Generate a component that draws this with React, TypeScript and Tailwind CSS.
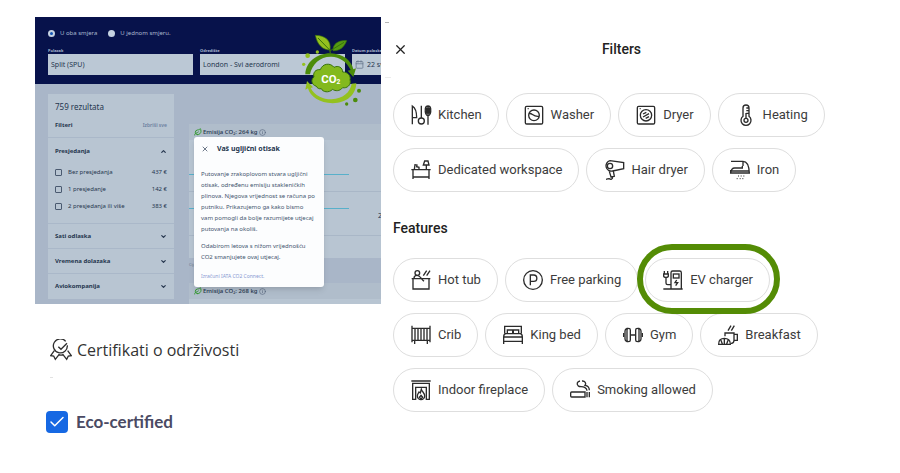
import React from "react";
import { Calendar, Check, ChevronDown, ChevronUp, Info, Leaf, X } from "lucide-react";

interface ChipItem {
    label: string;
    icon: React.ReactNode;
    highlighted?: boolean;
}

interface StopOption {
    label: string;
    price: string;
}

// All amenity icons share a 60x60 grid
const icons = {
    kitchen: (
        <>
            <path d="M4 58V3C12 8 17 20 17 38H4" />
            <path d="M31 2V39" />
            <circle cx="31" cy="48" r="9" />
            <path d="M51 33C45 31 42 22 43 11C44 5 47 3 51 3S58 5 59 11C60 22 57 31 51 33ZM51 3V59M47 8V26M55 8V26" />
        </>
    ),
    washer: (
        <>
            <rect x="4" y="4" width="52" height="53" rx="4" />
            <circle cx="30" cy="31" r="16" />
            <path d="M15 26C24 22 27 37 45 34M11 11H14" />
        </>
    ),
    dryer: (
        <>
            <rect x="4" y="4" width="52" height="53" rx="4" />
            <circle cx="30" cy="31" r="17" />
            <path d="M21 27L31 22M21 36L39 26M29 40L39 35M11 11H14" />
        </>
    ),
    heating: (
        <>
            <path d="M21 34V9A9 9 0 0 1 39 9V34A15 15 0 1 1 21 34Z" />
            <circle cx="30" cy="46" r="6" />
            <path d="M30 40V24M31 9H39M31 17H39M31 25H39" />
        </>
    ),
    workspace: (
        <>
            <path d="M1 29H59M6 29V57M54 29V57M6 51H54" />
            <path d="M10 28L12 14L18 15L17 20L24 22V28" />
            <path d="M46 28V15M41 3H51L54 15H37Z" />
        </>
    ),
    hairDryer: (
        <>
            <circle cx="18" cy="18" r="8" />
            <path d="M18 2L59 8V26L26 33A16 16 0 1 1 18 2Z" />
            <path d="M16 34L21 51L31 49L28 33M26 51C26 58 20 59 16 56C13 55 10 58 6 58" />
        </>
    ),
    iron: (
        <>
            <path d="M3 4H39C49 4 57 14 58 39H2C3 30 7 24 14 24H37V18M39 4V18M2 39V30M4 33H57" />
            <path d="M24 48H27M32 48H35M40 48H43M20 56H23M29 56H32M37 56H40" strokeWidth="3" />
        </>
    ),
    hotTub: (
        <>
            <path d="M2 26H58M6 26V57H54V26" />
            <circle cx="19" cy="9" r="7" />
            <path d="M9 25C9 18 12 16 18 16C29 16 31 28 39 34M47 2L37 17M57 2L47 17" />
        </>
    ),
    parking: (
        <>
            <circle cx="30" cy="30" r="28" />
            <path d="M22 46V15H32A9 9 0 0 1 32 34H22" />
        </>
    ),
    charger: (
        <>
            <path d="M1 57H59M24 57V8Q24 3 29 3H50Q55 3 55 8V57" />
            <rect x="31" y="12" width="17" height="12" />
            <path d="M4 3V12M14 3V12M2 12H16V18Q16 22 9 22Q2 22 2 18ZM9 22V39Q9 44 14 44H24M41 30L36 38H44L38 47" />
        </>
    ),
    crib: (
        <>
            <path d="M3 2V52M57 2V52M3 10H57M3 46H57M12 10V46M21 10V46M30 10V46M39 10V46M48 10V46M11 47V57M49 47V57" />
        </>
    ),
    bed: (
        <>
            <path d="M5 25V4H55V25M2 36Q2 26 9 26H51Q58 26 58 36V57M2 36V57M2 36H58M2 49H58" />
            <path d="M13 25V15H29V25M31 25V15H47V25" />
        </>
    ),
    gym: (
        <>
            <path d="M22 30H38M2 24V36M58 24V36" />
            <path d="M12 10Q6 12 6 18V42Q6 48 12 50ZM12 14Q12 10 17 10T22 15V45Q22 50 17 50T12 46" />
            <path d="M48 10Q54 12 54 18V42Q54 48 48 50ZM48 14Q48 10 43 10T38 15V45Q38 50 43 50T48 46" />
        </>
    ),
    breakfast: (
        <>
            <path d="M21 34V24H48V46Q48 55 40 55H38M48 28H58V46H48M39 2L30 17M49 2L40 17" />
            <path d="M2 58C1 46 9 40 19 40S38 46 37 58ZM13 57L9 46M26 57L30 46M19 41V57" />
        </>
    ),
    fireplace: (
        <>
            <path d="M1 3H59M3 10H57M5 11V58H14V22H46V58H55V11" />
            <path d="M31 28C33 35 42 40 41 48A11 11 0 0 1 19 48C19 42 22 40 24 36L28 39Z" />
            <path d="M30 46L25 52L30 57L35 52Z" />
        </>
    ),
    smoking: (
        <>
            <path d="M5 36H45V51H5Q2 51 2 48V39Q2 36 5 36ZM51 36V52M58 36V52" />
            <path d="M30 3C21 5 19 12 25 18C29 22 37 18 44 22Q51 26 51 32M36 3C45 2 50 10 45 16C54 17 58 24 58 31" />
        </>
    ),
};

const amenities: ChipItem[] = [
    { label: "Kitchen", icon: icons.kitchen },
    { label: "Washer", icon: icons.washer },
    { label: "Dryer", icon: icons.dryer },
    { label: "Heating", icon: icons.heating },
    { label: "Dedicated workspace", icon: icons.workspace },
    { label: "Hair dryer", icon: icons.hairDryer },
    { label: "Iron", icon: icons.iron },
];

const features: ChipItem[] = [
    { label: "Hot tub", icon: icons.hotTub },
    { label: "Free parking", icon: icons.parking },
    { label: "EV charger", icon: icons.charger, highlighted: true },
    { label: "Crib", icon: icons.crib },
    { label: "King bed", icon: icons.bed },
    { label: "Gym", icon: icons.gym },
    { label: "Breakfast", icon: icons.breakfast },
    { label: "Indoor fireplace", icon: icons.fireplace },
    { label: "Smoking allowed", icon: icons.smoking },
];

const stops: StopOption[] = [
    { label: "Bez presjedanja", price: "437 €" },
    { label: "1 presjedanje", price: "142 €" },
    { label: "2 presjedanja ili više", price: "383 €" },
];

const sections = ["Sati odlaska", "Vremena dolazaka", "Aviokompanija"];

const Chip: React.FC<{ item: ChipItem }> = ({ item }) => (
    <li className="relative">
        <button className="flex h-11 items-center gap-[7px] rounded-full border border-[#dedede] bg-white pr-4 pl-[17px] text-[13px] whitespace-nowrap text-[#3c3c3c]">
            <svg viewBox="0 0 60 60" className="size-5 overflow-visible fill-none stroke-[#2b2b2b] stroke-[4]" aria-hidden="true">
                {item.icon}
            </svg>
            {item.label}
        </button>
        {item.highlighted && (
            <span className="pointer-events-none absolute -top-3.5 -right-2.5 -bottom-3 -left-2 z-10 rounded-full border-6 border-[#548c05]" />
        )}
    </li>
);

const ChipList: React.FC<{ items: ChipItem[] }> = ({ items }) => (
    <ul className="flex flex-wrap gap-x-[7px] gap-y-[11px]">
        {items.map((item) => (
            <Chip key={item.label} item={item} />
        ))}
    </ul>
);

const Co2Badge: React.FC = () => (
    <svg viewBox="0 0 285 246" className="absolute top-[11px] left-[255px] h-[82px] w-[95px]" aria-hidden="true">
        <path d="M121 75C120 58 112 48 97 38" fill="none" stroke="#39730b" strokeWidth="4" />
        <path d="M76 22C105 22 125 38 120 66C99 66 82 52 76 22Z" fill="#94c11f" stroke="#39730b" strokeWidth="2" />
        <path d="M170 38C144 36 128 49 129 68C149 69 162 58 170 38Z" fill="#559b12" stroke="#39730b" strokeWidth="2" />
        <path d="M84 30L121 68L162 43" fill="none" stroke="#39730b" strokeWidth="3" />
        <path d="M46 139C47 103 80 76 121 76C160 77 184 98 190 124L198 121L190 147L173 128L182 126C171 101 149 87 124 86C91 85 66 108 60 139Z" fill="#4c8c0a" />
        <path d="M199 166C198 200 171 225 128 226C89 225 60 206 54 181L46 185L51 159L69 178L62 180C74 203 98 214 125 214C159 211 180 194 185 167Z" fill="#94c11f" />
        <path d="M78 174C64 171 62 153 72 147C68 134 77 123 91 125C98 105 122 104 132 118C145 111 158 119 158 132C174 132 183 144 180 155C185 171 170 182 158 179C149 190 136 190 128 184C116 196 98 192 94 182C88 184 81 180 78 174Z" fill="#83b91d" stroke="#39730b" strokeWidth="3" />
        <circle cx="53" cy="83" r="7" fill="#94c11f" />
        <circle cx="82" cy="72" r="5" fill="#94c11f" />
        <circle cx="41" cy="109" r="5" fill="#94c11f" />
        <circle cx="207" cy="188" r="6" fill="#4c8c0a" />
        <circle cx="196" cy="216" r="7" fill="#4c8c0a" />
        <circle cx="170" cy="228" r="5" fill="#4c8c0a" />
        <text x="94" y="165" fill="#fff" fontFamily="Roboto, sans-serif" fontWeight="700" fontSize="34">
            CO<tspan fontSize="20" dy="4">2</tspan>
        </text>
    </svg>
);

const Emission: React.FC<{ kg: number }> = ({ kg }) => (
    <div className="flex h-4 items-center gap-px bg-[#b0bdcb] pl-[5px] text-[6px] font-medium">
        <Leaf className="size-2 text-[#379b35]" strokeWidth={3} />
        <span>Emisija CO₂: {kg} kg</span>
        <Info className="ml-px size-[7px] text-[#52627b]" />
    </div>
);

const FlightSearch: React.FC = () => (
    <section className="relative mr-px overflow-hidden bg-[#a9b6c8] font-['Noto_Sans',sans-serif] text-[6px] text-[#25364e]">
        <form className="bg-[#07124b] px-[13px] pt-3 pb-[9px] text-[#a9b8ce]">
            <div className="flex h-2 items-center gap-[11px]">
                <label className="flex items-center gap-[5px]">
                    <input type="radio" name="trip" defaultChecked className="size-[7px] appearance-none rounded-full border-2 border-[#c5d2e2] bg-[#1557b5]" />
                    U oba smjera
                </label>
                <label className="flex items-center gap-[5px]">
                    <input type="radio" name="trip" className="size-[7px] appearance-none rounded-full bg-[#c5d2e2]" />
                    U jednom smjeru.
                </label>
            </div>
            <div className="mt-2.5 grid grid-cols-[145px_145px_145px] gap-[7px]">
                <label className="text-[4px] leading-[7px] font-bold">
                    Polazak
                    <input defaultValue="Split (SPU)" className="block h-[21px] w-full bg-[#bbc8d5] px-[3px] text-[7px] font-normal text-[#25364e]" />
                </label>
                <label className="text-[4px] leading-[7px] font-bold">
                    Odredište
                    <input defaultValue="London - Svi aerodromi" className="block h-[21px] w-full bg-[#bbc8d5] px-[3px] text-[7px] font-normal text-[#25364e]" />
                </label>
                <label className="text-[4px] leading-[7px] font-bold">
                    Datum polaska
                    <span className="flex h-[21px] items-center gap-[3px] bg-[#bbc8d5] px-[3px] font-normal text-[#25364e]">
                        <Calendar className="size-[9px] shrink-0 text-[#64748b]" strokeWidth={2} />
                        <input defaultValue="22 svi" className="w-full text-[7px]" />
                    </span>
                </label>
            </div>
        </form>

        <div className="flex gap-[15px] px-[13px] pt-2.5 pb-[5px]">
            <aside className="w-[126px] shrink-0 divide-y divide-[#aab8c9] bg-[#b8c5d2]">
                <div className="h-11 px-[7px] pt-2">
                    <p className="text-[8px] leading-[10px]">759 rezultata</p>
                    <div className="mt-2 flex items-center justify-between leading-[10px]">
                        <h2 className="font-bold">Filteri</h2>
                        <button className="text-[5px] font-semibold text-[#6b7f9f]">Izbriši sve</button>
                    </div>
                </div>
                <div role="group" aria-label="Presjedanja" className="h-[86px] px-[7px]">
                    <div className="flex h-[26px] items-center justify-between font-bold">
                        Presjedanja
                        <ChevronUp className="size-[7px]" strokeWidth={4} />
                    </div>
                    {stops.map((stop) => (
                        <label key={stop.label} className="flex h-[17px] items-center gap-[6px]">
                            <input type="checkbox" className="size-[7px] appearance-none rounded-[1px] border border-[#4a5a70]" />
                            {stop.label}
                            <span className="ml-auto">{stop.price}</span>
                        </label>
                    ))}
                </div>
                {sections.map((name) => (
                    <button key={name} className="flex h-[25px] w-full items-center justify-between px-[7px] font-bold">
                        {name}
                        <ChevronDown className="size-[7px]" strokeWidth={4} />
                    </button>
                ))}
            </aside>

            <div className="h-[205px] w-[210px] shrink-0 pt-[30px]">
                <article className="bg-[#b8c5d2]">
                    <Emission kg={264} />
                    <div className="h-[52px] border-b border-[#a9b7c7] pt-[34px]">
                        <div className="h-px w-40 bg-[#58b0ca]" />
                    </div>
                    <div className="flex h-11 border-b border-[#a9b7c7] pt-4">
                        <div className="h-px w-40 shrink-0 bg-[#58b0ca]" />
                        <span className="ml-[29px] pt-[3px] text-[7px] leading-[10px]">2</span>
                    </div>
                    <div className="h-[22px]" />
                </article>
                <p className="h-[25px] pt-1 text-[4px] leading-[6px] text-[#66758c]">Cijena</p>
                <article className="h-[25px] bg-[#b8c5d2]">
                    <Emission kg={268} />
                </article>
            </div>
        </div>

        <div role="dialog" aria-label="Vaš ugljični otisak" className="absolute top-[120px] left-[159px] h-[150px] w-[130px] rounded-[3px] bg-[#fcfdfe] px-[7px] pt-2 shadow-md">
            <div className="flex items-center gap-2 text-[7px] leading-2 font-bold">
                <button aria-label="Zatvori">
                    <X className="size-2" strokeWidth={2} />
                </button>
                <h3>Vaš ugljični otisak</h3>
            </div>
            <div className="mt-4 flex flex-col gap-1.5 leading-[11px] text-[#44556f]">
                <p>
                    Putovanje zrakoplovom stvara ugljični
                    <br />
                    otisak, određenu emisiju stakleničkih
                    <br />
                    plinova. Njegova vrijednost se računa po
                    <br />
                    putniku. Prikazujemo ga kako bismo
                    <br />
                    vam pomogli da bolje razumijete utjecaj
                    <br />
                    putovanja na okoliš.
                </p>
                <p>
                    Odabirom letova s nižom vrijednošću
                    <br />
                    CO2 smanjujete ovaj utjecaj.
                </p>
            </div>
            <a href="#iata" className="mt-2 block text-[5px] leading-[10px] text-[#8799d2]">
                Izračuni IATA CO2 Connect.
            </a>
        </div>

        <Co2Badge />
    </section>
);

export default function App() {
    return (
        <main className="grid min-h-screen grid-cols-[minmax(0,382fr)_minmax(0,518fr)] bg-white">
            <div className="pt-[17px] pl-[35px]">
                <FlightSearch />

                <div className="mt-[34px] ml-[15px] flex h-6 items-center gap-[5px] font-['Open_Sans',sans-serif] text-[16px] text-[#333]">
                    <svg viewBox="0 0 66 66" className="size-[22px] fill-none stroke-[#2e2e2e] stroke-[4]" aria-hidden="true">
                        <path d="M47 7A21 21 0 1 0 52 19" />
                        <path d="M25 23L33 31L51 13" />
                        <path d="M13 35L2 50L11 51L16 61L27 47M53 35L64 50L55 51L50 61L39 47M25 46Q33 51 41 46" />
                    </svg>
                    <h2>Certifikati o održivosti</h2>
                </div>
                <div className="mt-[15px] ml-[15px] h-px w-[3px] bg-[#e2e2e2]" />
                <label className="mt-[33px] ml-[11px] flex h-[22px] items-center gap-2 font-['Lato',sans-serif] text-[17px] font-bold text-[#4a4a63]">
                    <span className="grid size-[22px] place-items-center">
                        <input type="checkbox" defaultChecked className="col-start-1 row-start-1 size-[22px] appearance-none rounded-[4px] bg-[#1668e3]" />
                        <Check className="pointer-events-none col-start-1 row-start-1 size-[18px] text-white" strokeWidth={2} />
                    </span>
                    Eco-certified
                </label>
            </div>

            <section className="pt-[22px] pr-[50px] pl-[11px] font-['Roboto',sans-serif] text-[#222]">
                <div className="-ml-2 h-px w-1 bg-[#b5b5b5]" />
                <header className="mt-4 grid h-5 grid-cols-[1fr_auto_1fr] items-center">
                    <button aria-label="Close" className="w-fit">
                        <X className="size-[15px]" strokeWidth={2} />
                    </button>
                    <h1 className="text-[14px] font-medium">Filters</h1>
                </header>
                <div className="mt-[18px] mb-[15px] -ml-2 h-px w-1.5 bg-[#ececec]" />
                <ChipList items={amenities} />
                <h2 className="mt-[26px] mb-5 text-[14px] leading-5 font-medium">Features</h2>
                <ChipList items={features} />
            </section>
        </main>
    );
}
